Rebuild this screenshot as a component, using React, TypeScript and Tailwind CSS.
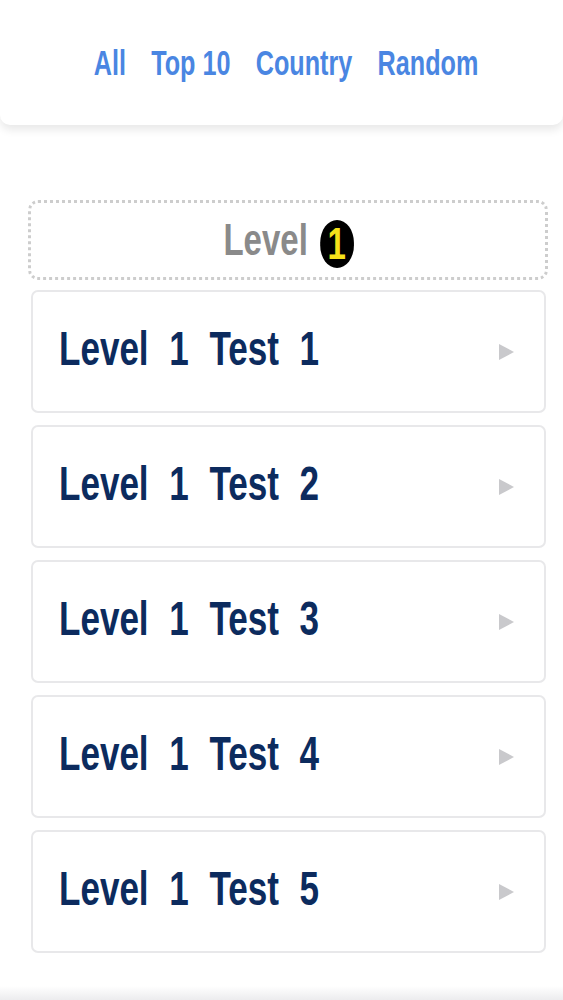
import { useState } from "react";

const tabs = ["All", "Top 10", "Country", "Random"];
const tests = [1, 2, 3, 4, 5];

export default function App() {
  const [active, setActive] = useState("All");

  return (
    <div
      className="min-h-[1000px] w-full bg-white overflow-hidden flex flex-col"
      style={{ fontFamily: '"Liberation Sans", Arial, sans-serif' }}
    >
      {/* Header tabs — the app uses a condensed face, so squeeze Liberation Sans */}
      <div className="h-[125px] bg-white rounded-b-[10px] shadow-[0_5px_8px_rgba(0,0,0,0.09)] flex items-center justify-center pl-[10px]">
        <div className="flex items-center gap-[35px] scale-x-[0.72] origin-center whitespace-nowrap">
          {tabs.map((t) => (
            <button
              key={t}
              onClick={() => setActive(t)}
              className={`text-[35px] font-bold text-[#4a86e2] leading-none ${active === t ? "opacity-100" : "opacity-100"}`}
            >
              {t}
            </button>
          ))}
        </div>
      </div>

      <div className="flex flex-col pt-[75px] pl-[28px] pr-[15px]">
        {/* Level heading */}
        <div className="h-[80px] border-[3px] border-dotted border-[#cdcdcd] rounded-[10px] flex items-center justify-center">
          <div className="flex items-center gap-[16px] scale-x-[0.75] origin-center pl-[2px]">
            <span className="text-[44px] font-bold text-[#8a8a8a] leading-none">Level</span>
            <span className="w-[45px] h-[48px] mt-[8px] rounded-full bg-black flex items-center justify-center text-[44px] font-bold text-[#f6e21a] leading-none">
              1
            </span>
          </div>
        </div>

        {/* Tests */}
        <div className="flex flex-col gap-[12px] mt-[10px] pl-[3px] pr-[2px]">
          {tests.map((n) => (
            <button
              key={n}
              className="h-[123px] border-2 border-[#e8e8ea] rounded-[7px] bg-white flex items-center justify-between pl-[26px] pr-[29px] pb-[6px]"
            >
              <span className="w-[265px] text-left overflow-visible">
                <span className="inline-block scale-x-[0.73] origin-left whitespace-nowrap text-[48px] font-bold text-[#0c2b5e] leading-none [word-spacing:15px]">
                  Level 1 Test {n}
                </span>
              </span>
              <svg width="17" height="18" viewBox="0 0 17 18" className="mt-[6px]">
                <polygon points="1,1 16,9 1,17" fill="#c9c9cc" />
              </svg>
            </button>
          ))}
        </div>
      </div>

      <div className="mt-auto h-[14px] bg-gradient-to-b from-white to-[#ececee]" />
    </div>
  );
}
